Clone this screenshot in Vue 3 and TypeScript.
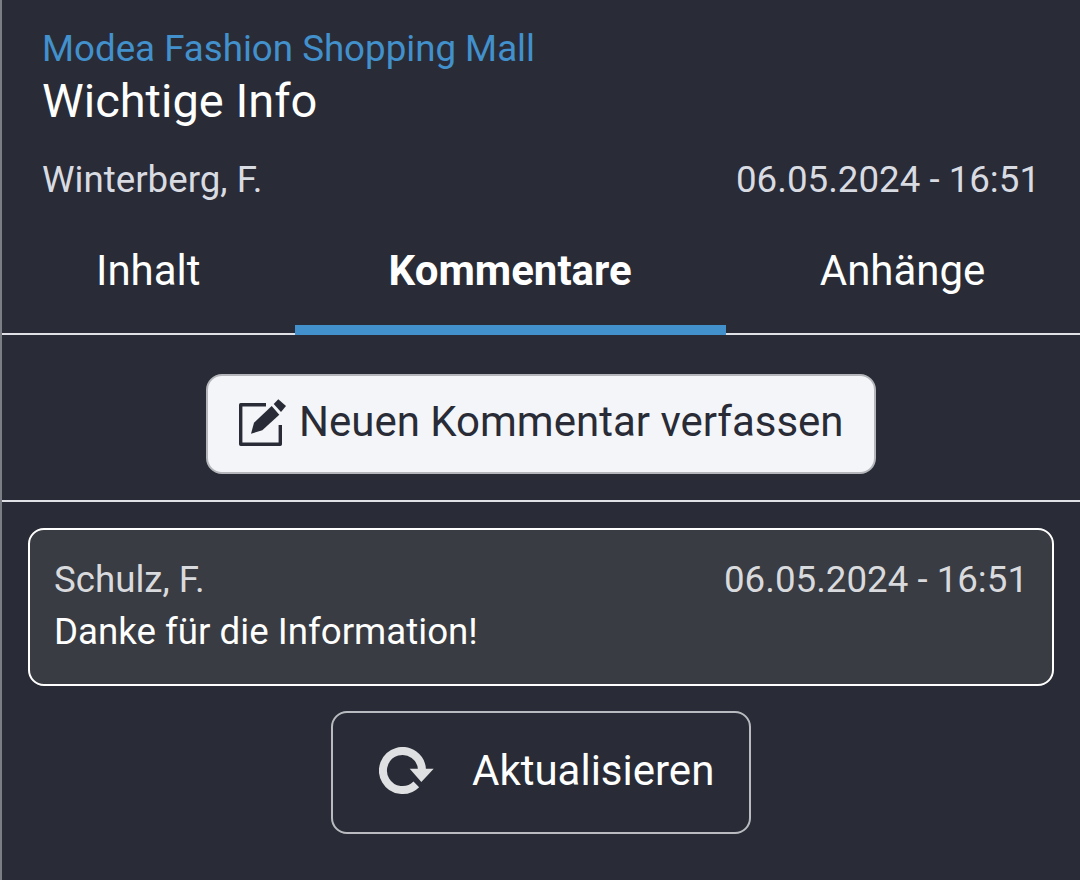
<template>
  <div class="panel">
    <header class="head">
      <div class="site">Modea Fashion Shopping Mall</div>
      <h1 class="title">Wichtige Info</h1>
      <div class="meta">
        <span>Winterberg, F.</span>
        <span>06.05.2024 - 16:51</span>
      </div>
    </header>

    <nav class="tabs">
      <button
        v-for="tab in tabs"
        :key="tab"
        class="tab"
        :class="{ active: tab === activeTab }"
      >
        {{ tab }}
      </button>
    </nav>

    <div class="new-row">
      <button class="new-btn">
        <svg class="edit-icon" viewBox="0 0 48 48" width="48" height="48">
          <path d="M27 5.700H1.700V45.300H41.300V26" fill="none" stroke="#292c36" stroke-width="3.400" stroke-linejoin="round" />
          <path d="M12 34.700L15 23.700L32.700 7L40.300 15.700L23.300 31.300Z" fill="#292c36" />
          <path d="M34.700 5L39.300 0.300L47 7L42 13Z" fill="#292c36" />
        </svg>
        <span class="new-label">Neuen Kommentar verfassen</span>
      </button>
    </div>

    <section class="comments">
      <article v-for="c in comments" :key="c.text" class="comment">
        <div class="comment-meta">
          <span>{{ c.author }}</span>
          <span>{{ c.date }}</span>
        </div>
        <div class="comment-text">{{ c.text }}</div>
      </article>
    </section>

    <div class="refresh-row">
      <button class="refresh-btn">
        <svg class="refresh-icon" viewBox="0 0 56 48" width="56" height="48">
          <path d="M43 23A19.500 19.500 0 1 0 37.300 37.300" fill="none" stroke="#dfe0e2" stroke-width="8" />
          <path d="M30.700 21.700H54.700L42.300 35Z" fill="#dfe0e2" />
        </svg>
        <span class="refresh-label">Aktualisieren</span>
      </button>
    </div>
  </div>
</template>

<script setup lang="ts">
interface CommentItem {
  author: string
  date: string
  text: string
}

const tabs = ['Inhalt', 'Kommentare', 'Anhänge']
const activeTab = 'Kommentare'

const comments: CommentItem[] = [
  { author: 'Schulz, F.', date: '06.05.2024 - 16:51', text: 'Danke für die Information!' }
]
</script>

<style>
html,
body {
  margin: 0;
  background: #292c36;
}
</style>

<style scoped>
.panel {
  box-sizing: border-box;
  width: 1080px;
  height: 880px;
  overflow: hidden;
  background: #292c36;
  border-left: 2px solid #7b7e85;
  font-family: Roboto, "Liberation Sans", sans-serif;
  color: #fff;
}

.head {
  padding: 27px 40px 0;
}

.site {
  font-size: 36.7px;
  line-height: 44px;
  color: #4290cc;
}

.title {
  margin: 0;
  font-size: 47px;
  font-weight: 400;
  line-height: 60px;
  color: #fff;
}

.meta {
  display: flex;
  justify-content: space-between;
  margin-top: 27px;
  font-size: 36.7px;
  line-height: 44px;
  color: #d9dbe2;
}

/* tabs */
.tabs {
  display: flex;
  height: 112px;
  margin-top: 19px;
  border-bottom: 2px solid #dfe1e6;
}

.tab {
  flex: 0 0 auto;
  padding: 0 94px 15px;
  background: none;
  border: 0;
  color: #fff;
  font: inherit;
  font-size: 42px;
  margin-bottom: -2px;
}

.tab.active {
  font-weight: 700;
  border-bottom: 10px solid #4290cc;
  padding-bottom: 5px;
}

.new-row {
  display: flex;
  justify-content: center;
  padding: 39px 0 26px;
  border-bottom: 2px solid #dfe1e6;
}

.new-btn {
  display: flex;
  align-items: center;
  gap: 12px;
  box-sizing: border-box;
  width: 670px;
  height: 100px;
  padding: 0 30px 0 31px;
  background: #f3f5f8;
  border: 2px solid #b4b6bb;
  border-radius: 16px;
  color: #292c36;
  font: inherit;
  font-size: 42px;
  white-space: nowrap;
}

.edit-icon {
  flex: none;
  margin-bottom: 2px;
}

.refresh-icon {
  flex: none;
  margin-bottom: 3px;
}

.new-label {
  padding-bottom: 5px;
}

.comments {
  padding: 26px 26px 0;
}

.comment {
  box-sizing: border-box;
  height: 158px;
  padding: 26px 24px 0;
  background: #393c42;
  border: 2px solid #fff;
  border-radius: 16px;
}

.comment-meta {
  display: flex;
  justify-content: space-between;
  font-size: 36.7px;
  line-height: 48px;
  color: #d9dadd;
}

.comment-text {
  font-size: 36.7px;
  line-height: 56px;
  color: #fff;
}

.refresh-row {
  display: flex;
  justify-content: center;
  padding-top: 25px;
}

.refresh-btn {
  display: flex;
  align-items: center;
  gap: 37px;
  box-sizing: border-box;
  width: 420px;
  height: 123px;
  padding: 0 0 0 46px;
  background: none;
  border: 2px solid #b9bbc0;
  border-radius: 16px;
  color: #fff;
  font: inherit;
  font-size: 42px;
}

.refresh-label {
  padding-bottom: 4px;
}
</style>
